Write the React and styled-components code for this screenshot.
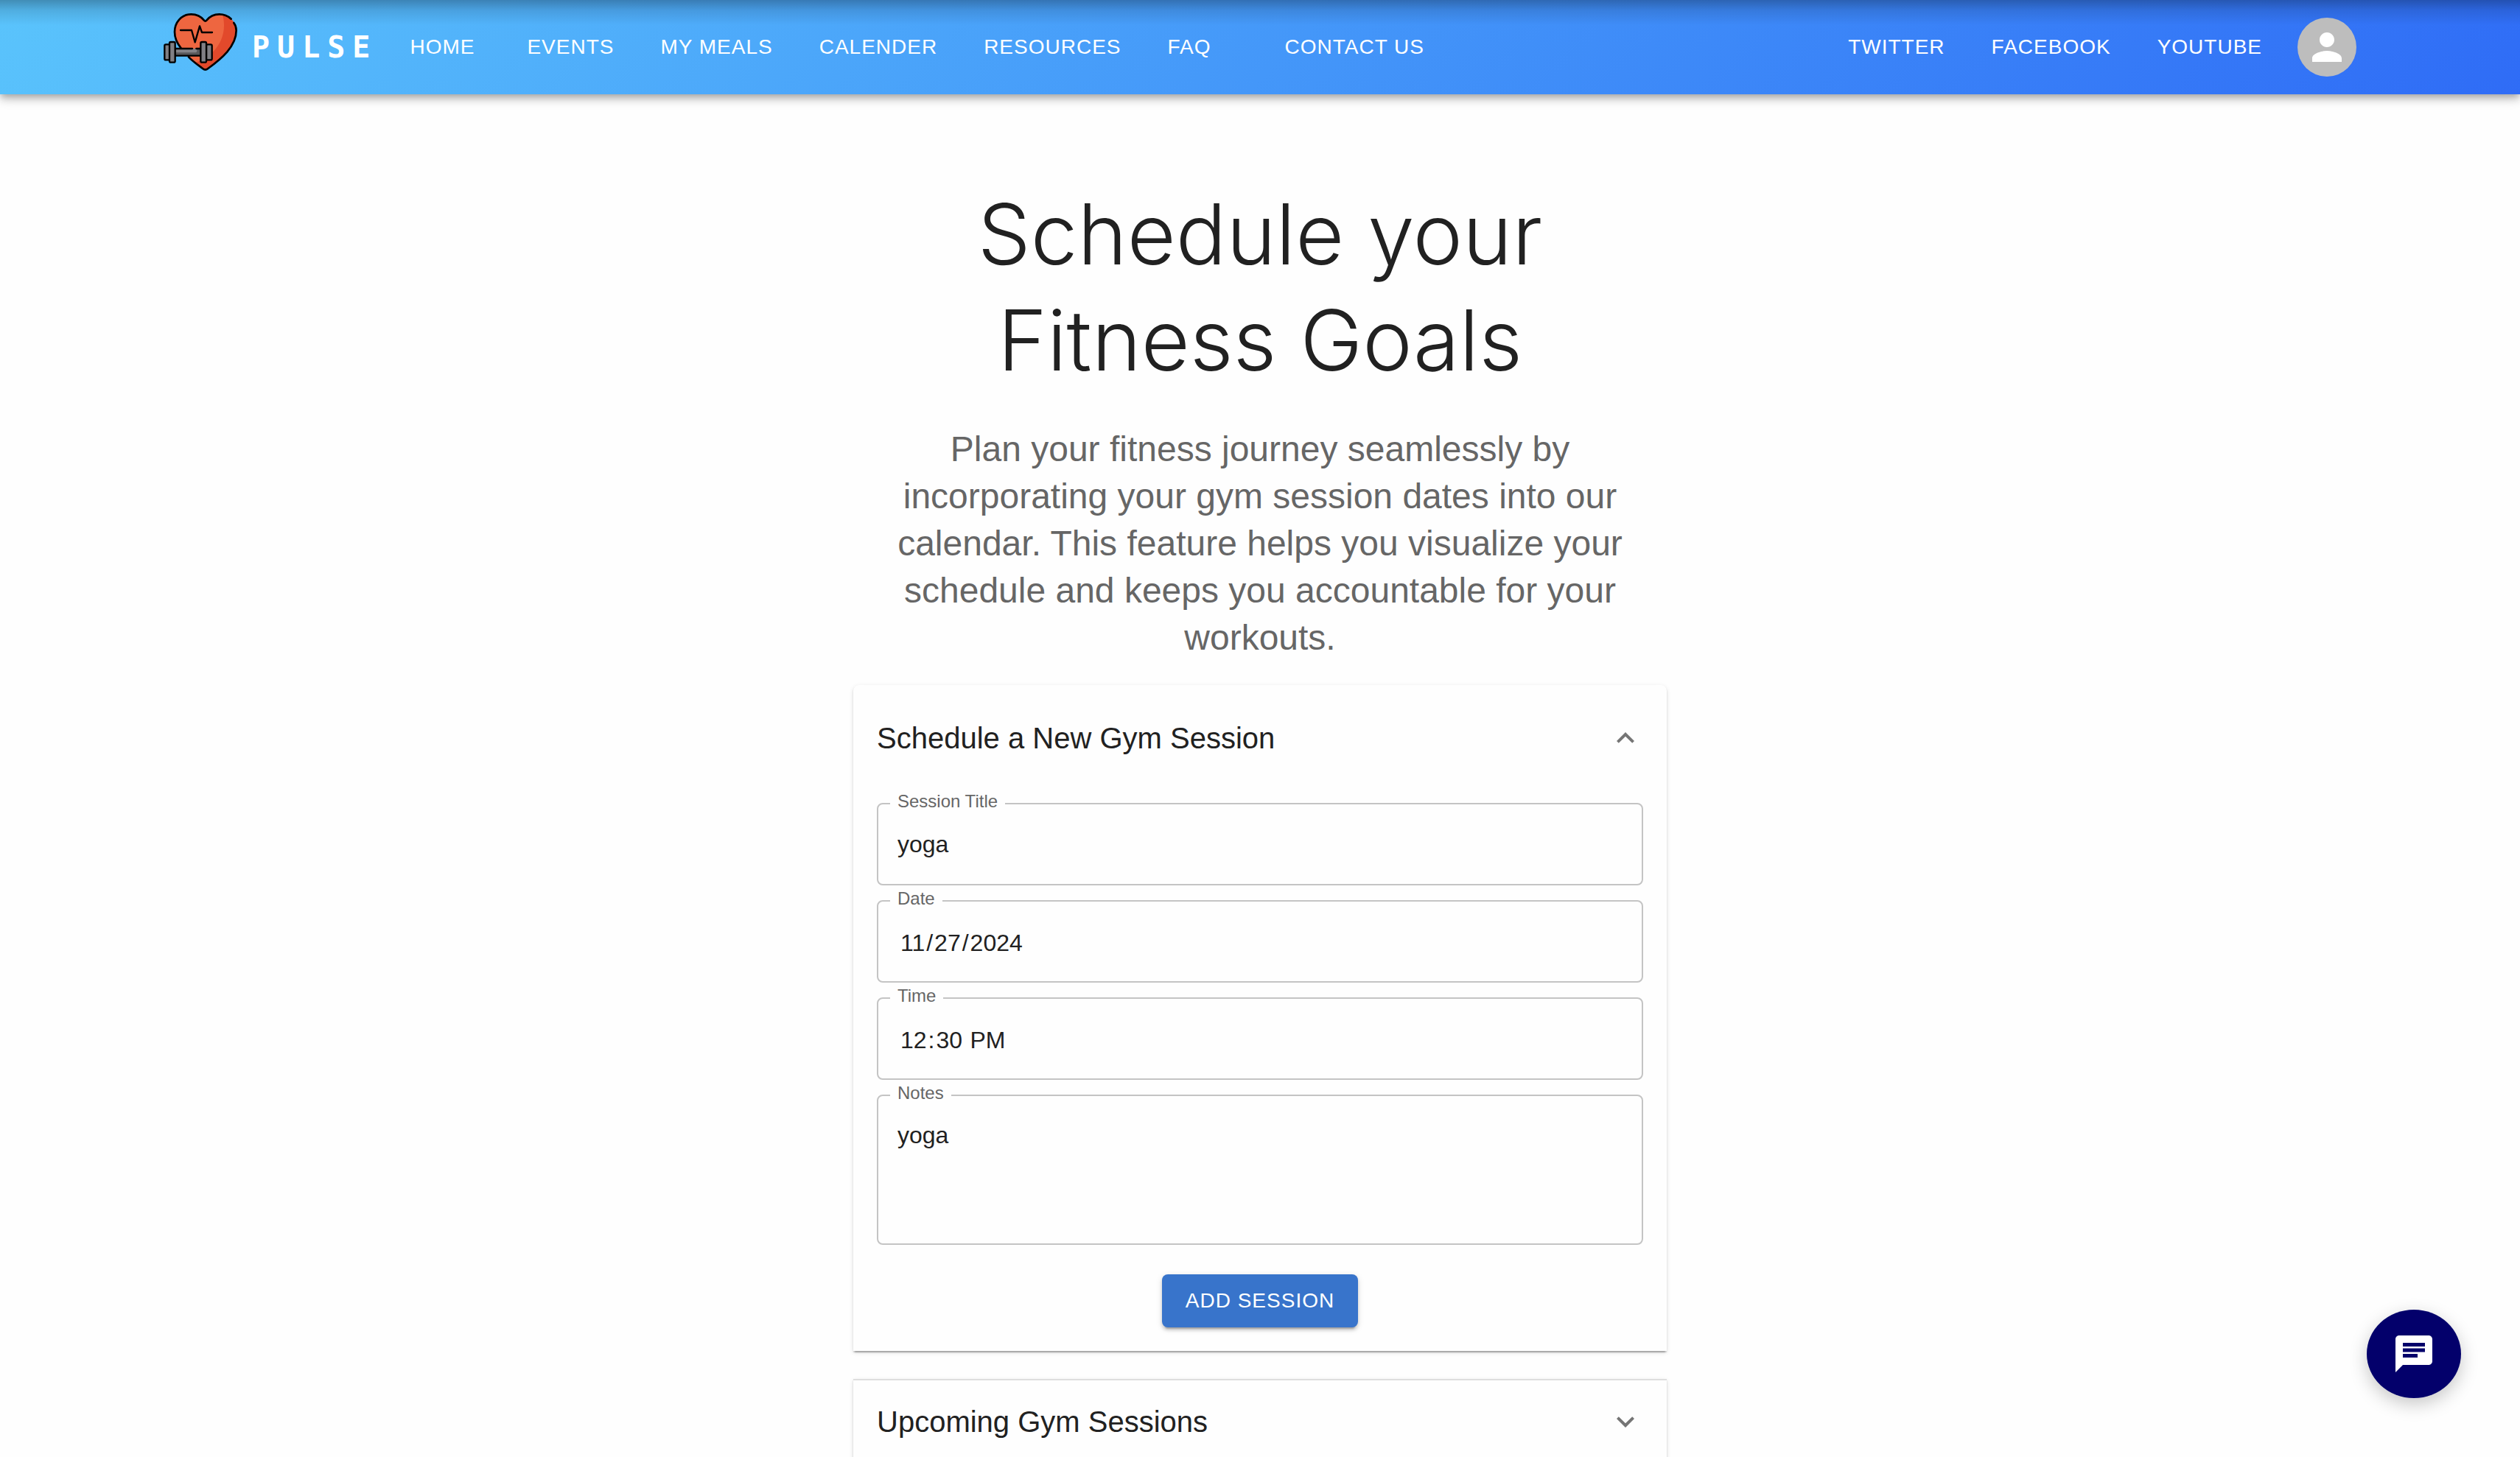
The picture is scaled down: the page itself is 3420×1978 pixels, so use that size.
import React, { useState } from 'react';
import styled, { createGlobalStyle } from 'styled-components';

const GlobalStyle = createGlobalStyle`
  *, *::before, *::after { box-sizing: border-box; }
  body {
    margin: 0;
    background: #fefefe;
    color: #212121;
    font-family: "Liberation Sans", Arial, sans-serif;
  }
  html { scrollbar-width: none; }
  button, input, textarea { font-family: inherit; color: inherit; }
`;

const AppBar = styled.header`
  background:
    linear-gradient(to bottom, rgba(0, 0, 0, 0.28), rgba(0, 0, 0, 0.11) 14px, rgba(0, 0, 0, 0) 34px),
    linear-gradient(135deg, #5ac4fc, #2f6cf6);
  box-shadow:
    0 4px 8px -2px rgba(0, 0, 0, 0.2),
    0 8px 10px rgba(0, 0, 0, 0.14),
    0 2px 20px rgba(0, 0, 0, 0.12);
`;

const Toolbar = styled.div`
  display: flex;
  align-items: center;
  max-width: 3072px;
  height: 128px;
  margin: 0 auto;
  padding: 0 48px;
`;

const Brand = styled.a`
  display: flex;
  align-items: center;
  gap: 18px;
  color: #fff;
  text-decoration: none;
`;

const LogoSvg = styled.svg`
  width: 102px;
  height: 80px;
  margin-bottom: 14px;
`;

const BrandName = styled.span`
  font: 700 40px/64px "DejaVu Sans Mono", monospace;
  letter-spacing: 10px;
`;

const Nav = styled.nav`
  display: flex;
  align-items: center;
  gap: 31px;
  padding: 0 32px 0 28px;
  flex: ${(p) => (p.$grow ? 1 : 'none')};
`;

const NavLink = styled.a`
  min-width: 128px;
  padding: 12px 16px;
  color: #fff;
  font-size: 28px;
  line-height: 48px;
  letter-spacing: 1px;
  text-decoration: none;
  text-transform: uppercase;
  white-space: nowrap;
`;

const AvatarButton = styled.button`
  display: grid;
  place-items: center;
  width: 80px;
  height: 80px;
  padding: 0;
  border: 0;
  border-radius: 50%;
  background: #bdbdbd;
  color: #fff;
`;

const Icon = styled.svg`
  width: ${(p) => p.$size}px;
  height: ${(p) => p.$size}px;
  fill: currentColor;
`;

const Main = styled.main`
  max-width: 1104px;
  margin: 0 auto;
  padding-top: 118px;
`;

const Title = styled.h1`
  margin: 0;
  font-family: Inter, "Liberation Sans", sans-serif;
  font-weight: 300;
  font-size: 114px;
  line-height: 144px;
  text-align: center;
`;

const Intro = styled.p`
  margin: 44px 0 32px;
  color: #666;
  font-size: 48px;
  line-height: 64px;
  text-align: center;
`;

const Accordion = styled.section`
  background: #fefefe;
  border-radius: ${(p) => (p.$first ? '8px 8px 0 0' : '0')};
  border-top: ${(p) => (p.$first ? '0' : '2px solid #dedede')};
  margin-bottom: 38px;
  box-shadow:
    0 4px 2px -2px rgba(0, 0, 0, 0.2),
    0 2px 2px rgba(0, 0, 0, 0.14),
    0 2px 6px rgba(0, 0, 0, 0.12);
`;

const SummaryHeading = styled.h2`
  margin: 0;
  font-size: 40px;
  font-weight: 400;
  line-height: 64px;
`;

const Summary = styled.button`
  display: flex;
  align-items: center;
  justify-content: space-between;
  width: 100%;
  padding: ${(p) => (p.$open ? '40px' : '24px')} 32px;
  border: 0;
  background: none;
  font: inherit;
  line-height: 64px;
  text-align: left;
`;

const Chevron = styled(Icon)`
  color: #757575;
  transform: ${(p) => (p.$open ? 'rotate(180deg)' : 'none')};
`;

const SessionForm = styled.form`
  display: flex;
  flex-direction: column;
  align-items: center;
  gap: 20px;
  padding: 16px 32px 32px;
`;

const Field = styled.div`
  position: relative;
  width: 100%;
`;

const FieldLabel = styled.label`
  position: absolute;
  top: -20px;
  left: 18px;
  padding: 0 10px;
  background: #fefefe;
  color: #666;
  font-size: 24px;
  line-height: 36px;
`;

const TextInput = styled.input`
  display: block;
  width: 100%;
  height: ${(p) => (p.as === 'textarea' ? '204px' : '112px')};
  padding: 30px 26px;
  border: 2px solid #c4c4c4;
  border-radius: 8px;
  background: none;
  font-size: 32px;
  line-height: 46px;
  outline: none;
  resize: none;
  &::-webkit-calendar-picker-indicator { display: none; }
  &::-webkit-datetime-edit { padding: 3px 2px 0; }
  &::-webkit-datetime-edit-month-field,
  &::-webkit-datetime-edit-day-field,
  &::-webkit-datetime-edit-year-field,
  &::-webkit-datetime-edit-hour-field,
  &::-webkit-datetime-edit-minute-field,
  &::-webkit-datetime-edit-ampm-field { padding: 0 2px; }
`;

const SubmitButton = styled.button`
  height: 72px;
  margin-top: 20px;
  padding: 0 32px;
  border: 0;
  border-radius: 8px;
  background: #3874cb;
  color: #fff;
  font-size: 28px;
  line-height: 48px;
  letter-spacing: 1px;
  text-transform: uppercase;
  box-shadow:
    0 6px 2px -4px rgba(0, 0, 0, 0.2),
    0 4px 4px rgba(0, 0, 0, 0.14),
    0 2px 10px rgba(0, 0, 0, 0.12);
`;

const ChatButton = styled.button`
  position: fixed;
  right: 80px;
  bottom: 80px;
  display: grid;
  place-items: center;
  width: 128px;
  height: 120px;
  padding: 0;
  border: 0;
  border-radius: 50%;
  background: #03006b;
  color: #fff;
  box-shadow: 0 8px 24px rgba(0, 0, 0, 0.22);
`;

const leftLinks = ['Home', 'Events', 'My Meals', 'Calender', 'Resources', 'FAQ', 'Contact Us'];
const rightLinks = ['Twitter', 'Facebook', 'YouTube'];

const heart =
  'M236 87C220 65 200 58 178 58C138 58 111 92 111 130C111 160 122 180 140 202L168 232C185 250 205 264 225 279Q236 289 247 279C300 240 362 190 362 124C362 112 358 101 352 93L341 77C325 62 310 58 293 58C272 58 253 66 236 87Z';

function Logo() {
  return (
    <LogoSvg viewBox="66 51 306 240" aria-hidden="true">
      <path d={heart} fill="#ee6640" />
      <path
        d="M306 60C325 62 350 80 358 100C370 180 300 240 236 284C220 275 208 266 196 254C240 244 312 190 312 104C312 88 310 74 306 60Z"
        fill="#e2492b"
      />
      <g fill="none" stroke="#000" strokeWidth="8" strokeLinecap="round" strokeLinejoin="round">
        <path d="M341 77C325 62 310 58 293 58C272 58 254 66 241 83Q236 89 231 83C218 66 200 58 178 58C138 58 111 92 111 130C111 156 122 178 137 196" />
        <path d="M168 232C185 250 205 264 225 279Q236 289 247 279C300 240 362 190 362 124C362 112 358 101 352 93" />
        <path d="M135 123H180L194 172L213 106L222 132H264" strokeWidth="7" />
      </g>
      <rect x="112" y="198" width="108" height="29" fill="#58585b" />
      <rect x="112" y="199" width="90" height="15" rx="6" fill="#838388" />
      <g stroke="#000" strokeWidth="7" strokeLinecap="round" strokeLinejoin="round" fill="#808085">
        <path d="M114 198H183M199 198H217M114 227H217" />
        <rect x="70" y="181" width="22" height="63" rx="5" />
        <rect x="90" y="171" width="23" height="83" rx="5" />
        <rect x="240" y="181" width="23" height="63" rx="5" />
        <rect x="217" y="171" width="23" height="83" rx="5" />
      </g>
    </LogoSvg>
  );
}

function AccordionSummary({ title, open, onToggle }) {
  return (
    <SummaryHeading>
      <Summary type="button" aria-expanded={open} onClick={onToggle} $open={open}>
        {title}
        <Chevron $size={48} $open={open} viewBox="0 0 24 24" aria-hidden="true">
          <path d="M16.59 8.59 12 13.17 7.41 8.59 6 10l6 6 6-6z" />
        </Chevron>
      </Summary>
    </SummaryHeading>
  );
}

function LabeledField({ id, label, ...rest }) {
  return (
    <Field>
      <TextInput id={id} {...rest} />
      <FieldLabel htmlFor={id}>{label}</FieldLabel>
    </Field>
  );
}

export default function App() {
  const [formOpen, setFormOpen] = useState(true);
  const [listOpen, setListOpen] = useState(false);

  return (
    <>
      <GlobalStyle />
      <AppBar>
        <Toolbar>
          <Brand href="#">
            <Logo />
            <BrandName>PULSE</BrandName>
          </Brand>
          <Nav $grow aria-label="Main">
            {leftLinks.map((t) => (
              <NavLink key={t} href="#">{t}</NavLink>
            ))}
          </Nav>
          <Nav aria-label="Social">
            {rightLinks.map((t) => (
              <NavLink key={t} href="#">{t}</NavLink>
            ))}
          </Nav>
          <AvatarButton type="button" aria-label="Account">
            <Icon $size={60} viewBox="0 0 24 24" aria-hidden="true">
              <path d="M12 12c2.21 0 4-1.79 4-4s-1.79-4-4-4-4 1.79-4 4 1.79 4 4 4zm0 2c-2.67 0-8 1.34-8 4v2h16v-2c0-2.66-5.33-4-8-4z" />
            </Icon>
          </AvatarButton>
        </Toolbar>
      </AppBar>

      <Main>
        <Title>Schedule your Fitness Goals</Title>
        <Intro>
          Plan your fitness journey seamlessly by incorporating your gym session dates into our
          calendar. This feature helps you visualize your schedule and keeps you accountable for
          your workouts.
        </Intro>

        <Accordion $first>
          <AccordionSummary
            title="Schedule a New Gym Session"
            open={formOpen}
            onToggle={() => setFormOpen(!formOpen)}
          />
          {formOpen && (
            <SessionForm onSubmit={(e) => e.preventDefault()}>
              <LabeledField id="title" label="Session Title" type="text" defaultValue="yoga" />
              <LabeledField id="date" label="Date" type="date" defaultValue="2024-11-27" />
              <LabeledField id="time" label="Time" type="time" defaultValue="12:30" />
              <LabeledField id="notes" label="Notes" as="textarea" defaultValue="yoga" />
              <SubmitButton type="submit">Add Session</SubmitButton>
            </SessionForm>
          )}
        </Accordion>

        <Accordion>
          <AccordionSummary
            title="Upcoming Gym Sessions"
            open={listOpen}
            onToggle={() => setListOpen(!listOpen)}
          />
        </Accordion>
      </Main>

      <ChatButton type="button" aria-label="Open chat">
        <Icon $size={60} viewBox="0 0 24 24" aria-hidden="true">
          <path d="M20 2H4c-1.1 0-1.99.9-1.99 2L2 22l4-4h14c1.1 0 2-.9 2-2V4c0-1.1-.9-2-2-2zM6 9h12v2H6V9zm8 5H6v-2h8v2zm4-6H6V6h12v2z" />
        </Icon>
      </ChatButton>
    </>
  );
}
